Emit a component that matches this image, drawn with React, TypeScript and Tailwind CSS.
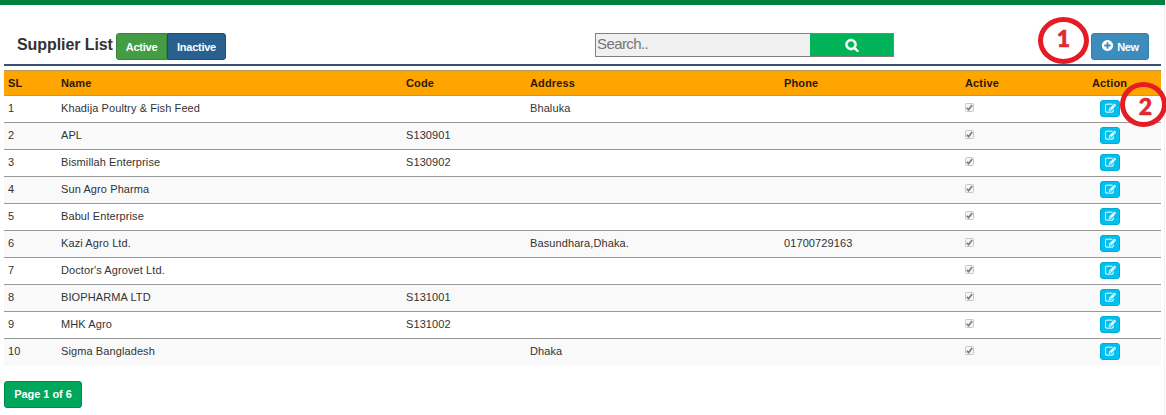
const rows = [
  { name: "Khadija Poultry & Fish Feed", code: "", address: "Bhaluka", phone: "" },
  { name: "APL", code: "S130901", address: "", phone: "" },
  { name: "Bismillah Enterprise", code: "S130902", address: "", phone: "" },
  { name: "Sun Agro Pharma", code: "", address: "", phone: "" },
  { name: "Babul Enterprise", code: "", address: "", phone: "" },
  { name: "Kazi Agro Ltd.", code: "", address: "Basundhara,Dhaka.", phone: "01700729163" },
  { name: "Doctor's Agrovet Ltd.", code: "", address: "", phone: "" },
  { name: "BIOPHARMA LTD", code: "S131001", address: "", phone: "" },
  { name: "MHK Agro", code: "S131002", address: "", phone: "" },
  { name: "Sigma Bangladesh", code: "", address: "Dhaka", phone: "" },
];

const columns = "grid grid-cols-[53px_345px_124px_254px_181px_125px_1fr] items-center pl-1";

const icons = {
  search:
    "M1216 832q0-185-131.5-316.5t-316.5-131.5-316.5 131.5-131.5 316.5 131.5 316.5 316.5 131.5 316.5-131.5 131.5-316.5zm512 832q0 52-38 90t-90 38q-54 0-90-38l-343-342q-179 124-399 124-143 0-273.5-55.5t-225-150-150-225-55.5-273.5 55.5-273.5 150-225 225-150 273.5-55.5 273.5 55.5 225 150 150 225 55.5 273.5q0 220-124 399l343 343q37 37 37 90z",
  edit:
    "M888 1184l116-116-152-152-116 116v56h96v96h56zm520-126v190q0 119-84.500 203.500t-203.500 84.500h-832q-119 0-203.500-84.500t-84.500-203.500v-832q0-119 84.500-203.500t203.500-84.500h832q63 0 117 25 15 7 18 23 3 17-9 29l-49 49q-14 14-32 8-23-6-45-6h-832q-66 0-113 47t-47 113v832q0 66 47 113t113 47h832q66 0 113-47t47-113v-126q0-13 9-22l64-64q15-15 35-7t20 29zm-96-738l288 288-672 672h-288v-288zm444 132l-92 92-288-288 92-92q28-28 68-28t68 28l152 152q28 28 28 68t-28 68z",
  plus:
    "M1344 960v-128q0-26-19-45t-45-19h-256v-256q0-26-19-45t-45-19h-128q-26 0-45 19t-19 45v256h-256q-26 0-45 19t-19 45v128q0 26 19 45t45 19h256v256q0 26 19 45t45 19h128q26 0 45-19t19-45v-256h256q26 0 45-19t19-45zm320-64q0 209-103 385.5t-279.5 279.5-385.5 103-385.5-103-279.5-279.5-103-385.5 103-385.5 279.5-279.5 385.5-103 385.5 103 279.5 279.5 103 385.5z",
};

function Icon({ name, className }: { name: keyof typeof icons; className: string }) {
  return (
    <svg viewBox="0 0 1792 1792" fill="currentColor" className={className}>
      <path d={icons[name]} />
    </svg>
  );
}

function Check() {
  return (
    <span className="mb-0.5 flex h-[9px] w-[9px] items-center justify-center rounded-[1.5px] border border-[#c8c8c8] bg-[#f5f5f5]">
      <svg viewBox="0 0 9 9" className="h-[9px] w-[9px] shrink-0" fill="none" stroke="#808080" strokeWidth="1.7">
        <path d="M1.8 4.8 3.6 6.6 7.2 1.9" />
      </svg>
    </span>
  );
}

function Marker({ label, className }: { label: string; className: string }) {
  return (
    <div className={`absolute flex items-center justify-center rounded-[50%] border-[5px] border-[#e51c23] font-['Lato',sans-serif] text-[23px] leading-none font-black tracking-normal text-[#dc2b31] [-webkit-text-stroke:0.6px_#dc2b31] ${className}`}>
      {label}
    </div>
  );
}

export default function App() {
  return (
    <div className="relative h-[415px] w-[1166px] overflow-hidden bg-white font-['Liberation_Sans',Arial,sans-serif] text-[11px] tracking-[0.1px] text-[#333]">
      <div className="flex h-full w-[1165px] flex-col border-r border-[#f1f1f1]">
        <div className="-mr-px h-[5px] shrink-0 bg-[#00803e]" />
        <header className="mr-[3px] ml-1 flex h-[61px] shrink-0 items-start border-b-2 border-[#3a5070] pt-7 pl-[13px]">
          <h1 className="mt-0.5 w-[99px] text-[16px] leading-[20px] font-bold tracking-[-0.08px] whitespace-nowrap">Supplier List</h1>
          <div className="flex h-[27px] text-[11px] font-bold tracking-[-0.25px] text-white">
            <button className="w-[51px] rounded-l-[3px] border border-[#398439] bg-[#449d44] pt-0.5">Active</button>
            <button className="w-[59px] rounded-r-[3px] border border-[#204d74] bg-[#286090] pt-0.5">Inactive</button>
          </div>
          <div className="ml-[369px] flex h-6 w-[299px] border border-[#808080] bg-[#f0f0f0]">
            <input
              placeholder="Search.."
              className="w-[214px] bg-transparent pb-px pl-px text-[15px] tracking-[-0.6px] outline-none placeholder:text-[#757575]"
            />
            <button className="flex flex-1 items-center justify-center bg-[#00b359] text-white">
              <Icon name="search" className="mb-px h-[14px] w-[14px] stroke-current stroke-[70]" />
            </button>
          </div>
          <button className="mr-[12px] ml-auto flex h-[27px] w-[58px] items-center justify-center gap-[3px] rounded-[3px] border border-[#367fa9] bg-[#3c8dbc] pt-px font-bold tracking-[-0.3px] text-white">
            <Icon name="plus" className="mb-[3px] h-[13px] w-[13px]" />
            New
          </button>
        </header>

        <div className="mt-1 mr-[3px] ml-1">
          <div className={`${columns} h-[26px] border-y border-[#b89a58] bg-[#ffa500] font-bold tracking-[0.15px] text-[#2b1a0a]`}>
            <span>SL</span>
            <span>Name</span>
            <span>Code</span>
            <span>Address</span>
            <span>Phone</span>
            <span>Active</span>
            <span className="pl-0.5">Action</span>
          </div>
          {rows.map((row, i) => (
            <div key={row.name} className={`${columns} h-[27px] border-b border-[#999] pb-0.5 last:border-transparent odd:bg-[#f9f9f9] even:bg-white`}>
              <span>{i + 1}</span>
              <span>{row.name}</span>
              <span>{row.code}</span>
              <span>{row.address}</span>
              <span>{row.phone}</span>
              <Check />
              <button className="ml-[10px] flex h-[17px] w-5 items-center justify-center rounded-[3px] border border-[#00acd6] bg-[#00c0ef] text-white">
                <Icon name="edit" className="h-[11px] w-[11px] stroke-current stroke-[30]" />
              </button>
            </div>
          ))}
        </div>

        <button className="mt-[15px] ml-1 h-[27px] w-[78px] shrink-0 rounded-[3px] border border-[#008d4c] bg-[#00a65a] font-bold tracking-[-0.05px] text-white">
          Page 1 of 6
        </button>
      </div>

      <Marker label="1" className="top-[17px] left-[1038px] h-[47px] w-[51px] pb-1" />
      <Marker label="2" className="top-[82px] left-[1120px] h-[45px] w-[47px] pt-1 pl-1" />
    </div>
  );
}
